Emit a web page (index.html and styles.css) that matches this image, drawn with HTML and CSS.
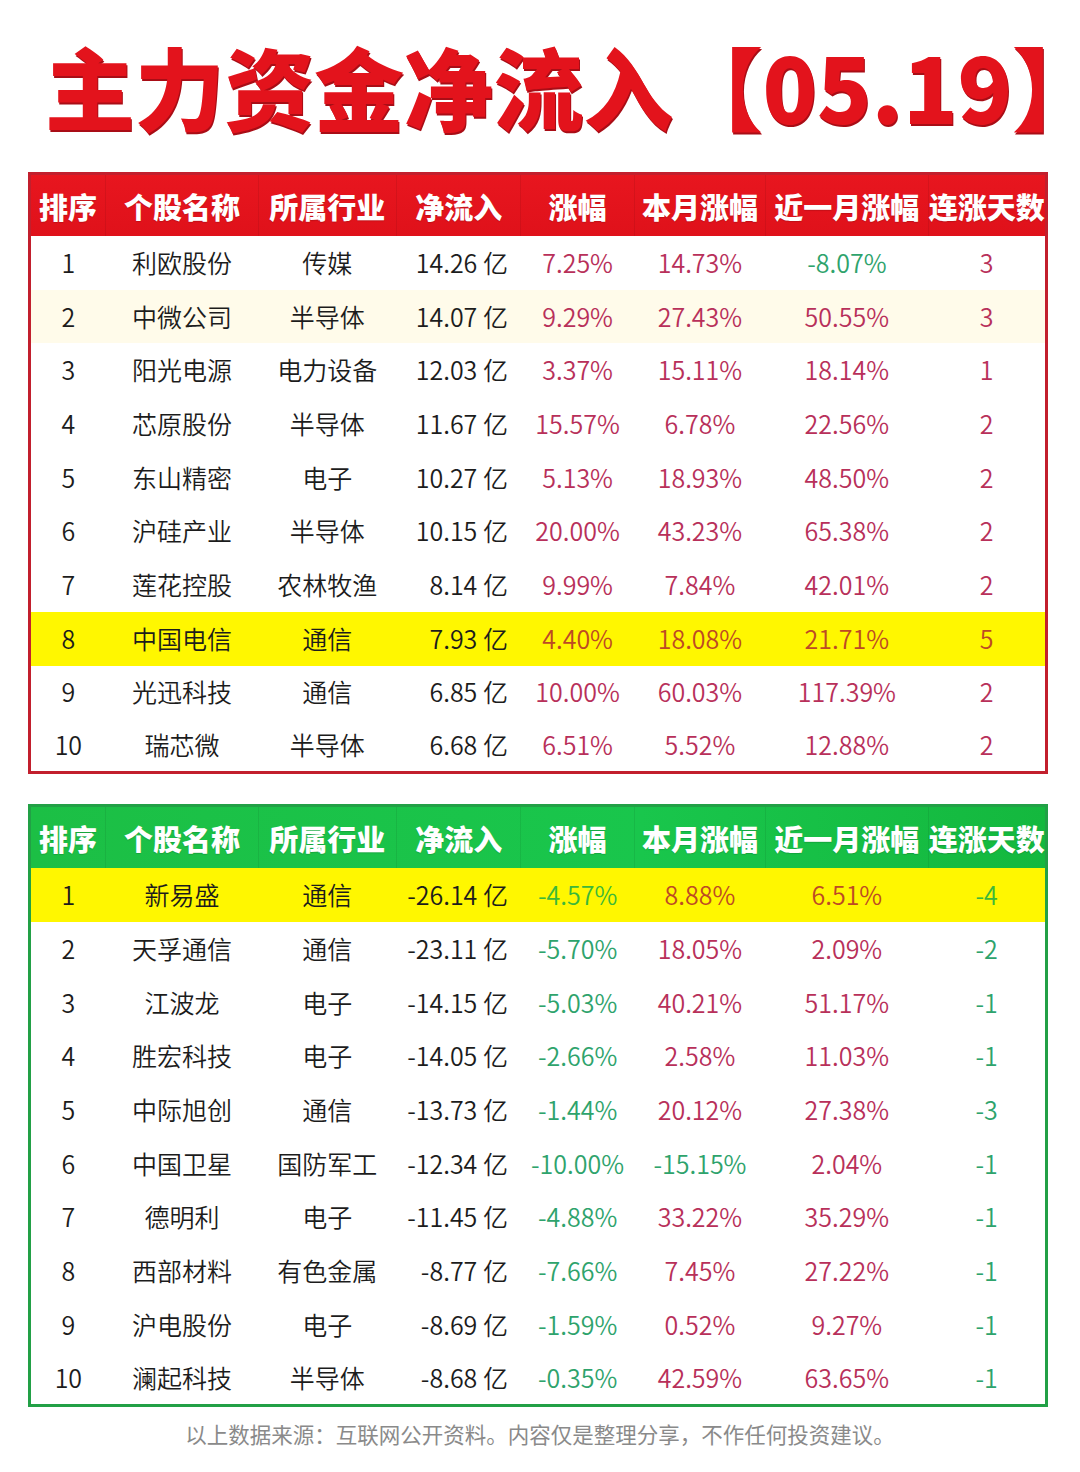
FILE: index.html
```html
<!DOCTYPE html>
<html lang="zh-CN">
<head>
<meta charset="utf-8">
<title>主力资金净流入【05.19】</title>
<link rel="stylesheet" href="styles.css">
</head>
<body>
<h1 class="title">主力资金净流入【05.19<span class="close">】</span></h1>

<table class="board board-in">
  <colgroup>
    <col class="c1"><col class="c2"><col class="c3"><col class="c4"><col class="c5"><col class="c6"><col class="c7"><col class="c8">
  </colgroup>
  <thead>
    <tr><th>排序</th><th>个股名称</th><th>所属行业</th><th>净流入</th><th>涨幅</th><th>本月涨幅</th><th>近一月涨幅</th><th>连涨天数</th></tr>
  </thead>
  <tbody>
    <tr><td>1</td><td>利欧股份</td><td>传媒</td><td class="amt">14.26 亿</td><td class="r">7.25%</td><td class="r">14.73%</td><td class="g">-8.07%</td><td class="r">3</td></tr>
    <tr class="cream"><td>2</td><td>中微公司</td><td>半导体</td><td class="amt">14.07 亿</td><td class="r">9.29%</td><td class="r">27.43%</td><td class="r">50.55%</td><td class="r">3</td></tr>
    <tr><td>3</td><td>阳光电源</td><td>电力设备</td><td class="amt">12.03 亿</td><td class="r">3.37%</td><td class="r">15.11%</td><td class="r">18.14%</td><td class="r">1</td></tr>
    <tr><td>4</td><td>芯原股份</td><td>半导体</td><td class="amt">11.67 亿</td><td class="r">15.57%</td><td class="r">6.78%</td><td class="r">22.56%</td><td class="r">2</td></tr>
    <tr><td>5</td><td>东山精密</td><td>电子</td><td class="amt">10.27 亿</td><td class="r">5.13%</td><td class="r">18.93%</td><td class="r">48.50%</td><td class="r">2</td></tr>
    <tr><td>6</td><td>沪硅产业</td><td>半导体</td><td class="amt">10.15 亿</td><td class="r">20.00%</td><td class="r">43.23%</td><td class="r">65.38%</td><td class="r">2</td></tr>
    <tr><td>7</td><td>莲花控股</td><td>农林牧渔</td><td class="amt">8.14 亿</td><td class="r">9.99%</td><td class="r">7.84%</td><td class="r">42.01%</td><td class="r">2</td></tr>
    <tr class="hl"><td>8</td><td>中国电信</td><td>通信</td><td class="amt">7.93 亿</td><td class="r">4.40%</td><td class="r">18.08%</td><td class="r">21.71%</td><td class="r">5</td></tr>
    <tr><td>9</td><td>光迅科技</td><td>通信</td><td class="amt">6.85 亿</td><td class="r">10.00%</td><td class="r">60.03%</td><td class="r">117.39%</td><td class="r">2</td></tr>
    <tr><td>10</td><td>瑞芯微</td><td>半导体</td><td class="amt">6.68 亿</td><td class="r">6.51%</td><td class="r">5.52%</td><td class="r">12.88%</td><td class="r">2</td></tr>
  </tbody>
</table>

<table class="board board-out">
  <colgroup>
    <col class="c1"><col class="c2"><col class="c3"><col class="c4"><col class="c5"><col class="c6"><col class="c7"><col class="c8">
  </colgroup>
  <thead>
    <tr><th>排序</th><th>个股名称</th><th>所属行业</th><th>净流入</th><th>涨幅</th><th>本月涨幅</th><th>近一月涨幅</th><th>连涨天数</th></tr>
  </thead>
  <tbody>
    <tr class="hl"><td>1</td><td>新易盛</td><td>通信</td><td class="amt">-26.14 亿</td><td class="g">-4.57%</td><td class="r">8.88%</td><td class="r">6.51%</td><td class="g">-4</td></tr>
    <tr><td>2</td><td>天孚通信</td><td>通信</td><td class="amt">-23.11 亿</td><td class="g">-5.70%</td><td class="r">18.05%</td><td class="r">2.09%</td><td class="g">-2</td></tr>
    <tr><td>3</td><td>江波龙</td><td>电子</td><td class="amt">-14.15 亿</td><td class="g">-5.03%</td><td class="r">40.21%</td><td class="r">51.17%</td><td class="g">-1</td></tr>
    <tr><td>4</td><td>胜宏科技</td><td>电子</td><td class="amt">-14.05 亿</td><td class="g">-2.66%</td><td class="r">2.58%</td><td class="r">11.03%</td><td class="g">-1</td></tr>
    <tr><td>5</td><td>中际旭创</td><td>通信</td><td class="amt">-13.73 亿</td><td class="g">-1.44%</td><td class="r">20.12%</td><td class="r">27.38%</td><td class="g">-3</td></tr>
    <tr><td>6</td><td>中国卫星</td><td>国防军工</td><td class="amt">-12.34 亿</td><td class="g">-10.00%</td><td class="g">-15.15%</td><td class="r">2.04%</td><td class="g">-1</td></tr>
    <tr><td>7</td><td>德明利</td><td>电子</td><td class="amt">-11.45 亿</td><td class="g">-4.88%</td><td class="r">33.22%</td><td class="r">35.29%</td><td class="g">-1</td></tr>
    <tr><td>8</td><td>西部材料</td><td>有色金属</td><td class="amt">-8.77 亿</td><td class="g">-7.66%</td><td class="r">7.45%</td><td class="r">27.22%</td><td class="g">-1</td></tr>
    <tr><td>9</td><td>沪电股份</td><td>电子</td><td class="amt">-8.69 亿</td><td class="g">-1.59%</td><td class="r">0.52%</td><td class="r">9.27%</td><td class="g">-1</td></tr>
    <tr><td>10</td><td>澜起科技</td><td>半导体</td><td class="amt">-8.68 亿</td><td class="g">-0.35%</td><td class="r">42.59%</td><td class="r">63.65%</td><td class="g">-1</td></tr>
  </tbody>
</table>

<p class="note">以上数据来源：互联网公开资料。内容仅是整理分享，不作任何投资建议。</p>
</body>
</html>
```

FILE: styles.css
```css
html, body {
  margin: 0;
  padding: 0;
  background: #ffffff;
  overflow: hidden;
}

body {
  width: 1080px;
  font-family: "Noto Sans CJK SC", "Noto Sans", sans-serif;
}

.title {
  margin: 40px 0 0 45px;
  height: 90px;
  width: 1025px;
  font-size: 90px;
  line-height: 90px;
  font-weight: 900;
  color: #e3131c;
  white-space: nowrap;
  letter-spacing: -0.3px;
  text-shadow: 1px 2px 0 #a90d16;
}

.title .close {
  letter-spacing: -44px;
}

.board {
  width: 1020px;
  margin-left: 28px;
  border-collapse: collapse;
  table-layout: fixed;
  border: 3px solid #c21f2d;
}

.board-in {
  margin-top: 42px;
}

.board-out {
  margin-top: 30px;
  border-color: #22a046;
}

.c1 { width: 76px; }
.c2 { width: 152px; }
.c3 { width: 138px; }
.c4 { width: 124px; }
.c5 { width: 113px; }
.c6 { width: 131px; }
.c7 { width: 162px; }
.c8 { width: 118px; }

.board th {
  height: 61px;
  padding: 0;
  font-size: 29px;
  font-weight: 900;
  color: #ffffff;
  text-align: center;
  white-space: nowrap;
  border-left: 1px solid rgba(0, 0, 0, 0.07);
  text-shadow: 0 1px 1px rgba(0, 0, 0, 0.15);
}

.board th:first-child {
  border-left: none;
}

.board-in thead tr {
  background: linear-gradient(180deg, #e8161f 0%, #df111a 100%);
}

.board-out thead tr {
  background: linear-gradient(90deg, #1cbf45 0%, #19c64c 60%, #14b83e 100%);
}

.board td {
  height: 53.7px;
  padding: 0 0 2px;
  box-sizing: border-box;
  font-size: 25px;
  font-weight: 350;
  color: #1c1c1c;
  text-align: center;
  white-space: nowrap;
}

.board td.amt {
  text-align: right;
  padding-right: 13px;
}

.board td.r {
  color: #b8305a;
}

.board td.g {
  color: #2ea36c;
}

.board tr.cream {
  background: #fffbea;
}

.board tr.hl {
  background: #fff700;
}

.board tr.hl td.r {
  color: #bd4a24;
}

.board tr.hl td.g {
  color: #3cb83a;
}

.note {
  margin: 11px 0 0;
  text-align: center;
  font-size: 21.5px;
  color: #8a8a8a;
  letter-spacing: 0;
}
```
